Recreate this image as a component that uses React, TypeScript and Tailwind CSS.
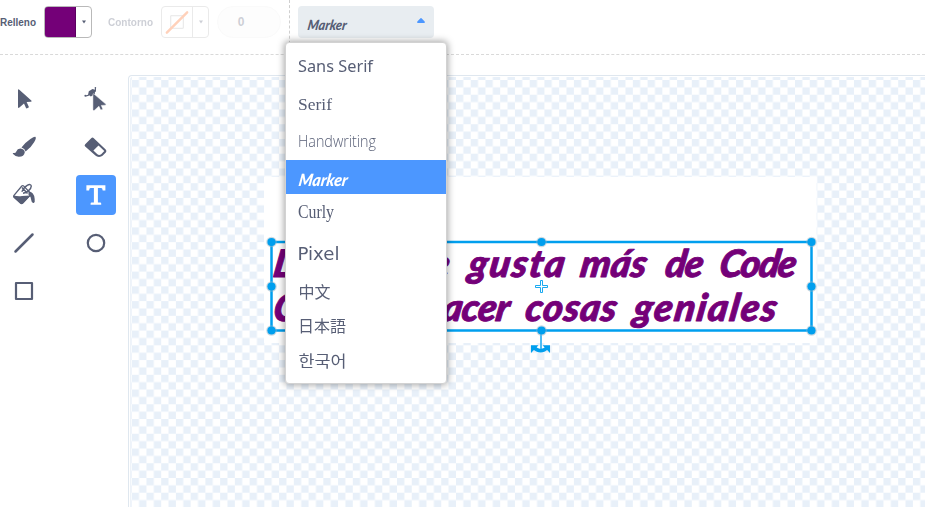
import React from 'react';

const INK = '#575e75';

function Word({ x, y, w, children }: { x: number; y: number; w: number; children: string }) {
  return (
    <text transform={`translate(${x} ${y}) skewX(-9)`} textLength={w - 3} lengthAdjust="spacing" fontSize="38" fontWeight="900" fontStyle="italic"
      stroke="#740078" strokeWidth="0.9" strokeLinejoin="round">{children}</text>
  );
}

function Tool({ active = false, children }: { active?: boolean; children: React.ReactNode }) {
  return (
    <button className={`flex h-10 w-10 items-center justify-center rounded ${active ? 'bg-[#4c97ff] text-white' : 'text-[#575e75]'}`}>
      <svg width="24" height="24" viewBox="0 0 24 24" fill="currentColor" overflow="visible">{children}</svg>
    </button>
  );
}

function Toolbar() {
  return (
    <header className="flex h-[55px] shrink-0 border-b border-dashed border-[#d9d9d9] text-[10px] font-bold text-[#575e75]">
      <div className="flex h-11 w-[289px] shrink-0 items-center">
        <svg width="37" height="20"><text x="0" y="14" textLength="36" lengthAdjust="spacingAndGlyphs" fill={INK}>Relleno</text></svg>
        <div className="ml-[7px] flex h-8 w-12 items-center overflow-hidden rounded border border-[#b9b9b9]">
          <div className="-my-px -ml-px h-8 w-8 shrink-0 rounded-l border border-[#5b0060] bg-[#740078]" />
          <svg width="15" height="10" viewBox="0 0 15 10"><path d="M6 3.500h4L8 6.500z" fill={INK} /></svg>
        </div>
        <div className="ml-4 flex items-center opacity-30">
          <svg width="46" height="20"><text x="0" y="14" textLength="45" lengthAdjust="spacingAndGlyphs" fill={INK}>Contorno</text></svg>
          <div className="ml-[7px] flex h-8 w-12 items-center rounded border border-[#b9b9b9]">
            <svg className="border-r border-[#b9b9b9]" width="31" height="30" viewBox="0 0 31 30" fill="none">
              <path d="M9 8.500h13v13H9z" stroke="#aaa" />
              <path d="M5 26 26 5" stroke="#ff661a" strokeWidth="2.500" strokeLinecap="round" />
            </svg>
            <svg width="15" height="10" viewBox="0 0 15 10"><path d="M6 3.500h4L8 6.500z" fill={INK} /></svg>
          </div>
          <div className="ml-2 flex h-8 w-16 items-center justify-center rounded-full border border-[#ededed] bg-[#f7f7f7] pr-4 text-xs">0</div>
        </div>
      </div>
      <div className="h-[54px] border-l border-dashed border-[#cfcfcf] pt-1.5 pl-2">
        <div className="flex h-8 w-[136px] items-start rounded bg-[#e8edf1]">
          <svg width="136" height="32">
            <text transform="translate(9 24) skewX(-9)" textLength="39" lengthAdjust="spacingAndGlyphs" fontSize="14" fontWeight="900" fontStyle="italic" fill={INK} className="font-['Lato',sans-serif]">Marker</text>
            <path d="M119.300 15.500 122.500 12.300q.5-.5 1 0l3.200 3.200q.8 1.500-.8 1.500h-5.800q-1.600 0-.8-1.500z" fill="#4c97ff" />
          </svg>
        </div>
      </div>
    </header>
  );
}

function Tools() {
  return (
    <nav className="grid h-[241px] w-[128px] shrink-0 grid-cols-[40px_40px] content-start gap-x-8 gap-y-2 pt-6 pl-1">
      <Tool><path transform="translate(.6 .4)" d="M5.400 2.900q0-1.700 1.300-.5l12 10.800q1.200 1.100-.5 1.200l-4.200.2 2.100 4.500q.4.900-.4 1.300l-1.200.5q-.8.400-1.200-.5l-1.900-4.400-4.600 4.200q-1.400 1.100-1.400-.5z" /></Tool>
      <Tool>
        <path d="M1 8.800q3.500.6 5-2.200Q8 3.800 11.400 4.200V.8" fill="none" stroke="currentColor" strokeWidth="1.100" />
        <circle cx="11.400" cy=".7" r=".8" /><circle cx="1.300" cy="8.700" r=".9" />
        <path d="M4.800 4.200 8.500 2l2.600.7-.3 4.600-4 2.200-2.700-2z" />
        <path d="M8.700 8q0-1.500 1.200-.5l11.700 10q1 1-.5 1.100l-4 .2 1.600 3.800-2.200.9-1.800-3.900-4.400 4q-1.600 1-1.600-.6z" transform="translate(.2 -.4)" stroke="white" strokeWidth=".5" />
      </Tool>
      <Tool>
        <g transform="translate(0 .5)">
          <path d="M23.300 1.300q1.500 1-1.200 5.500-3.300 5.700-8.500 9.200-.7-3-4.100-4 3.500-4.700 8.900-8.400 4.100-2.800 4.900-2.300z" />
          <path d="M8.500 13q4 .7 4.300 3.700-.7 4.500-5.900 4.500-3.500.1-5.800-2.700-1-1.300.6-1 2 .3 2.600-1.600.9-2.700 4.200-2.900z" />
        </g>
      </Tool>
      <Tool>
        <path transform="translate(0 .5)" d="m1.200 8.700 6-6q1.300-1.300 2.600 0L21.700 14q1.500 1.500.1 3l-3.300 3.300q-1.200 1.100-3.500 1.100-2.200 0-3.600-1.300L1.200 11q-1.200-1.100 0-2.300zm8.200 6.200 3.700 3.600q1.900 1.600 4.100.3l3.100-3.200-5.800-5.500z" fillRule="evenodd" />
      </Tool>
      <Tool>
        <path d="M2 12.300 9.800 3q1-.9 2 .1l7.500 8-8.500 9q-1.200 1-2.400 0L2.200 14.200q-.8-.9-.2-1.900z" fill="none" stroke="currentColor" strokeWidth="1.300" />
        <path d="M1.500 12.500q5 1.200 8.500.5 4-.5 8.500-.5l-7.700 8q-1.100 1-2.300-.1L1.500 14.500q-.8-.9 0-2z" />
        <path d="M9.800 8.800C13 2 18.800-.2 19.300 3c0 3.200-4.500 6.700-8.300 7.300M10 4.500l5.500 6" fill="none" stroke="currentColor" strokeWidth="1.400" />
        <path d="M16.500 8.500q5.500 0 6.200 7.500.5 3.300-1 3.900-2 .6-2.400-2.700-.4-4-2.800-5.500z" />
      </Tool>
      <Tool active><path d="M2.400 2.200h19v5.200h-2.700q-.2-2.300-1.600-2.300h-3.200v14.400h2.300q1 0 1 .9v1.400H6.600v-1.400q0-.9 1-.9h2.300V5.100H6.700q-1.500 0-1.600 2.300H2.400z" /></Tool>
      <Tool><path d="M3.500 20.500 20.500 3.500" fill="none" stroke="currentColor" strokeWidth="2.500" strokeLinecap="round" /></Tool>
      <Tool><circle cx="12" cy="12" r="8.200" fill="none" stroke="currentColor" strokeWidth="2.200" /></Tool>
      <Tool><path d="M4 4h16v16H4z" fill="none" stroke="currentColor" strokeWidth="2.200" strokeLinejoin="round" /></Tool>
    </nav>
  );
}

const handles = [[271.5, 242], [541.5, 242], [811.5, 242], [271.5, 286.5], [811.5, 286.5], [271.5, 330.5], [541.5, 330.5], [811.5, 330.5]];

function Canvas() {
  return (
    <main className="mt-5 h-[432px] min-w-0 flex-1 overflow-hidden rounded-tl border-t border-l border-[#dfe7ef]">
      <svg width="796" height="431" viewBox="129 76 796 431" className="font-['Lato',sans-serif]">
        <defs>
          <pattern id="checks" width="14.740" height="14.740" x="131.700" y="80" patternUnits="userSpaceOnUse">
            <path d="M0 0h7.370v7.370H0zM7.370 7.370h7.370v7.370H7.370z" fill="#e8f0f9" />
          </pattern>
        </defs>
        <path d="M131 77h794v430H131z" fill="url(#checks)" />
        <path d="M130.500 507V79q0-1.500 1.500-1.500" fill="none" stroke="#eef3f9" />
        <path d="M264 177h552.500v166H264z" fill="#fff" />
        <g fill="#740078">
          <Word x={272} y={277} w={179}>Lo que me</Word>
          <Word x={467} y={277} w={99}>gusta</Word>
          <Word x={579} y={277} w={69}>más</Word>
          <Word x={664} y={277} w={41}>de</Word>
          <Word x={718} y={277} w={80}>Code</Word>
          <Word x={272} y={321} w={132}>Club es</Word>
          <Word x={421} y={321} w={90}>hacer</Word>
          <Word x={524} y={321} w={94}>cosas</Word>
          <Word x={632} y={321} w={146}>geniales</Word>
        </g>
        <path d="M271.500 242h540v88.500h-540z" fill="none" stroke="#009fee" strokeWidth="2.500" />
        <path d="M541 330v20" stroke="#4cbcf4" strokeWidth="2" />
        {handles.map(([x, y]) => (
          <g key={`${x}-${y}`}><circle cx={x} cy={y} r="5.300" fill="#9bb5c5" opacity=".5" /><circle cx={x} cy={y} r="4.100" fill="#009fee" /></g>
        ))}
        <path d="M540.500 280.500h2v5h5v2h-5v5h-2v-5h-5v-2h5z" fill="#fff" stroke="#009fee" strokeWidth=".9" />
        <path d="M533.500 347q7 7.500 14.500 0" fill="none" stroke="#009fee" strokeWidth="3.500" />
        <path d="M531 345.300h7.500L531 353zM550 345.300h-7.500L550 353z" fill="#009fee" />
      </svg>
    </main>
  );
}

type Option = { label: string; h: string; y: number; w: number; size: number; font: string; x?: number; active?: boolean; weight?: number };

const options: Option[] = [
  { label: 'Sans Serif', h: 'h-[42px]', y: 29, w: 75, size: 16, font: "font-['Noto_Sans',sans-serif]" },
  { label: 'Serif', h: 'h-[38px]', y: 25, w: 34, size: 16, font: "font-['Liberation_Serif',serif]", weight: 500 },
  { label: 'Handwriting', h: 'h-[37px]', y: 24, w: 78, size: 15.5, font: "font-['Open_Sans',sans-serif]", weight: 300 },
  { label: 'Marker', h: 'h-[34px]', y: 26, w: 49, size: 17, font: "italic font-['Lato',sans-serif]", weight: 900, active: true },
  { label: 'Curly', h: 'h-[38px]', y: 24, w: 36, size: 18, font: "font-['Liberation_Serif',serif]" },
  { label: 'Pixel', h: 'h-[42px]', y: 28, w: 42, size: 18, x: 11.5, font: "font-['DejaVu_Sans',sans-serif]" },
  { label: '中文', h: 'h-[35px]', y: 24, w: 32, size: 16, font: "font-['Noto_Sans_CJK_SC',sans-serif]", weight: 400, x: 12.5 },
  { label: '日本語', h: 'h-[35px]', y: 23, w: 48, size: 16, font: "font-['Noto_Sans_CJK_JP',sans-serif]", weight: 400 },
  { label: '한국어', h: 'h-[39px]', y: 23, w: 48, size: 16, font: "font-['Noto_Sans_CJK_KR',sans-serif]", weight: 400, x: 12.5 },
];

function FontMenu() {
  return (
    <div className="absolute top-[42px] left-[285px] w-[162px] overflow-hidden rounded border border-[#d2d2d2] bg-white shadow-[0_0_7px_1px_rgba(0,0,0,0.35)]">
      {options.map((o) => (
        <div key={o.label} className={`${o.h} ${o.active ? 'bg-[#4c97ff] text-white' : 'text-[#575e75]'}`}>
          <svg width="160" height="34" fill="currentColor" overflow="visible">
            <text transform={`translate(${o.x ?? 12} ${o.y}) skewX(${o.active ? -9 : 0})`} textLength={o.w} lengthAdjust="spacingAndGlyphs" fontSize={o.size} fontWeight={o.weight ?? 400} className={o.font}>{o.label}</text>
          </svg>
        </div>
      ))}
    </div>
  );
}

export default function App() {
  return (
    <div className="relative flex h-[507px] w-[925px] flex-col overflow-hidden bg-white font-['Liberation_Sans',Arial,sans-serif]">
      <Toolbar />
      <div className="flex"><Tools /><Canvas /></div>
      <FontMenu />
    </div>
  );
}
